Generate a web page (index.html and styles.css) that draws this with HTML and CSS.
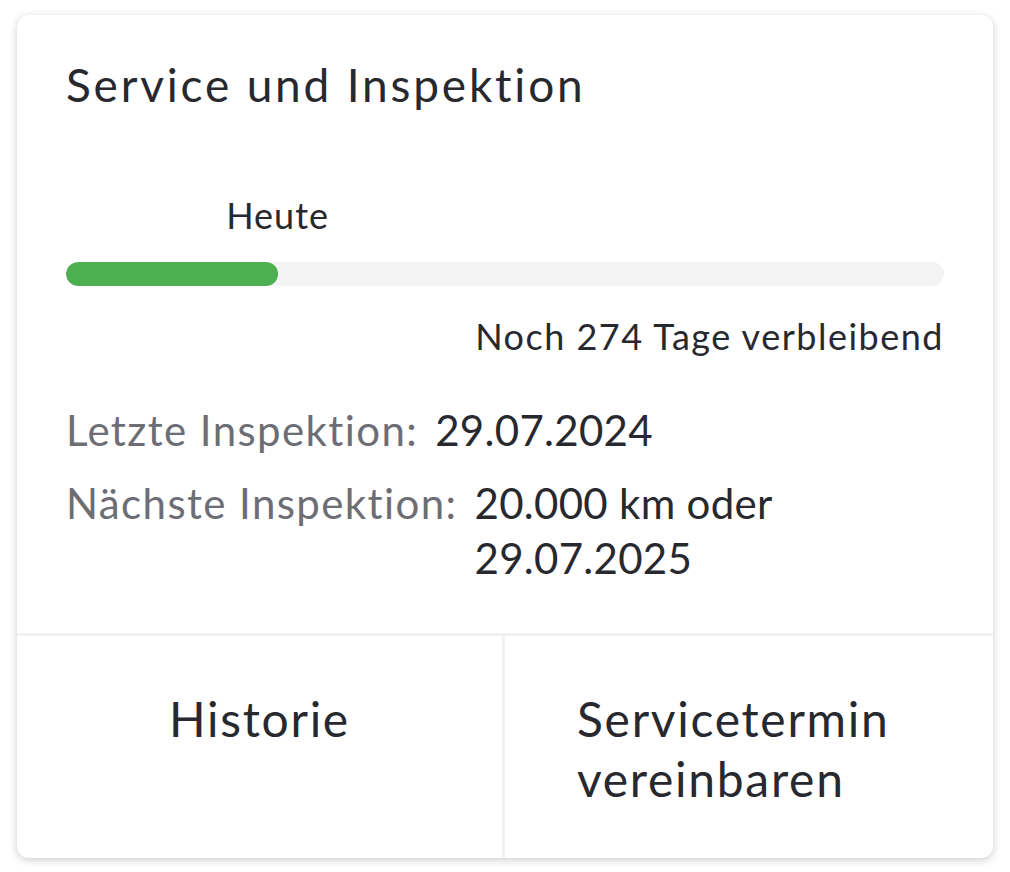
FILE: index.html
```html
<!DOCTYPE html>
<html lang="de">
<head>
<meta charset="utf-8">
<title>Service und Inspektion</title>
<link rel="stylesheet" href="styles.css">
</head>
<body>
<div class="card">
  <div class="card-body">
    <h2 class="title">Service und Inspektion</h2>
    <div class="progress">
      <div class="today-row">
        <div class="today-spacer" style="width: 24.1%"></div>
        <span class="today">Heute</span>
      </div>
      <div class="track"><div class="fill" style="width: 24.1%"></div></div>
      <div class="remaining">Noch 274 Tage verbleibend</div>
    </div>
    <div class="facts">
      <div class="fact">
        <span class="fact-label">Letzte Inspektion:</span>
        <span class="fact-value">29.07.2024</span>
      </div>
      <div class="fact">
        <span class="fact-label">Nächste Inspektion:</span>
        <span class="fact-value">20.000 km oder 29.07.2025</span>
      </div>
    </div>
  </div>
  <div class="actions">
    <div class="action"><span class="action-text">Historie</span></div>
    <div class="action"><span class="action-text">Servicetermin vereinbaren</span></div>
  </div>
</div>
</body>
</html>
```

FILE: styles.css
```css
html, body {
  margin: 0;
  padding: 0;
  background: #ffffff;
}

body {
  font-family: "Lato", "Noto Sans", "DejaVu Sans", sans-serif;
  font-variant-ligatures: none;
  color: #28282f;
  padding: 15px 17px 14px 17px;
}

.card {
  background: #ffffff;
  border-radius: 12px;
  box-shadow: 0 2px 8px rgba(0, 0, 0, 0.2);
  overflow: hidden;
}

.card-body {
  padding: 42px 49px 47px 49px;
}

.title {
  margin: 0;
  font-size: 46px;
  line-height: 56px;
  font-weight: 400;
  letter-spacing: 2.8px;
}

.progress {
  margin-top: 80px;
}

.today-row {
  display: flex;
  font-size: 36px;
  line-height: 44px;
}

.today {
  transform: translateX(-50%);
  white-space: nowrap;
  letter-spacing: 1px;
}

.track {
  margin-top: 25px;
  height: 24px;
  border-radius: 12px;
  background: #f3f3f3;
  overflow: hidden;
}

.fill {
  height: 100%;
  border-radius: 12px;
  background: #4caf50;
}

.remaining {
  margin-top: 28px;
  text-align: right;
  font-size: 36px;
  line-height: 44px;
  letter-spacing: 1.5px;
}

.facts {
  margin-top: 45px;
  display: flex;
  flex-direction: column;
  gap: 18px;
  font-size: 42px;
  line-height: 55px;
}

.fact {
  display: flex;
  gap: 17px;
}

.fact-label {
  color: #6d6d75;
  white-space: nowrap;
  letter-spacing: 1.4px;
}

.fact-value {
  color: #28282f;
  letter-spacing: 0.3px;
}

.actions {
  display: grid;
  grid-template-columns: 1fr 1fr;
  border-top: 3px solid #f2f2f2;
}

.action {
  display: flex;
  justify-content: center;
  padding: 53px 72px 49px 72px;
  font-size: 48px;
  line-height: 60px;
  letter-spacing: 1.7px;
}

.action:first-child {
  border-right: 3px solid #f2f2f2;
}
```
